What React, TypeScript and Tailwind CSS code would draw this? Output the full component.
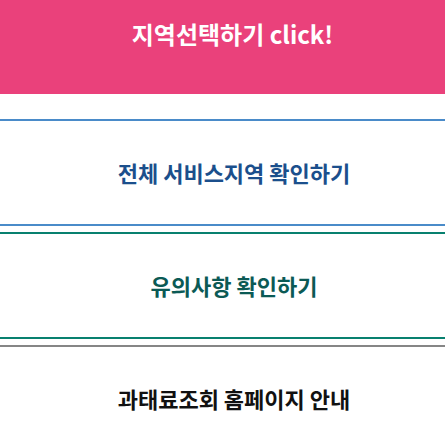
const sections = [
    { label: "전체 서비스지역 확인하기", line: "border-[#4a8bc9]", text: "text-[#1b4f8c]" },
    { label: "유의사항 확인하기", line: "border-[#08806f]", text: "text-[#0b5a55]" },
    { label: "과태료조회 홈페이지 안내", line: "border-[#868686]", text: "text-[#111111]" },
];

export default function App()
{
    return (
        <div className="w-[445px] h-[440px] overflow-hidden bg-white font-['Noto_Sans_CJK_KR','Noto_Sans',sans-serif]">
            <div className="h-[94px] bg-[#ea417b] pt-[18px] pl-[20px] text-center text-[24px] leading-[32px] font-bold text-white">
                지역선택하기 click!
            </div>
            <div className="mt-[25px] flex flex-col gap-[6px]">
                {sections.map((section) => (
                    <div key={section.label} className={`h-[107px] border-y-2 ${section.line} pl-[23px] flex items-center justify-center`}>
                        <span className={`text-[22px] font-bold ${section.text}`}>{section.label}</span>
                    </div>
                ))}
            </div>
        </div>
    );
}
